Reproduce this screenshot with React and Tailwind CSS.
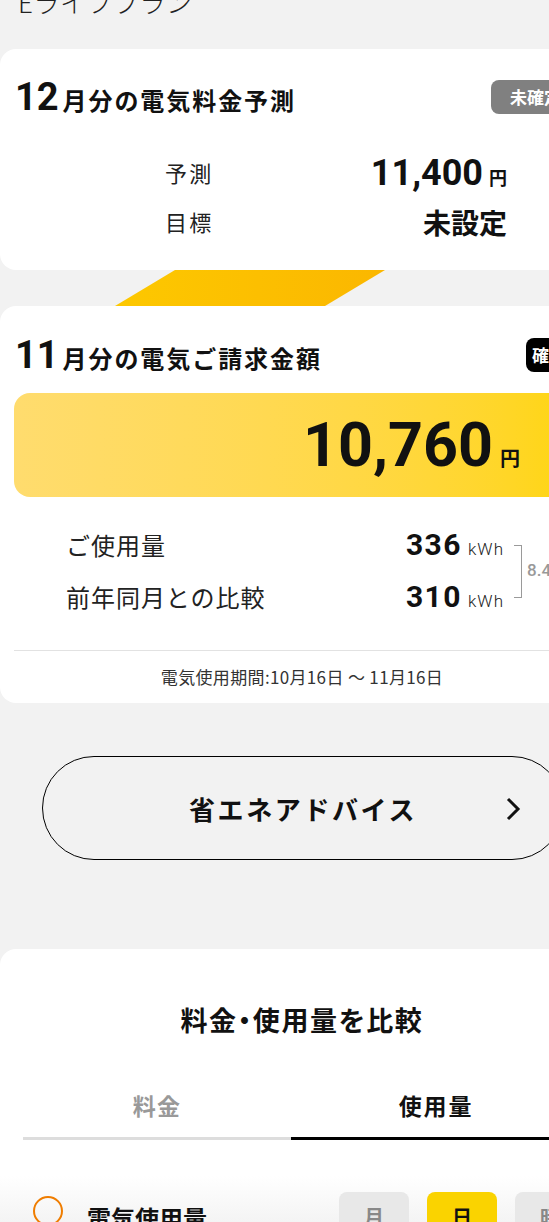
const jp = { fontFamily: '"Noto Sans CJK JP", "Noto Sans", sans-serif' }
const num = { fontFamily: 'Roboto, "Noto Sans CJK JP", sans-serif' }

function Badge({ children, className }) {
  return (
    <div
      className={`h-[34px] shrink-0 rounded-[8px] flex items-center text-[17px] font-bold text-white ${className}`}
    >
      {children}
    </div>
  )
}

function CardTitle({ month, label, badge }) {
  return (
    <div className="flex items-center justify-between h-[34px]">
      <div className="flex items-baseline pl-[1px]">
        <span style={num} className="text-[38px] font-bold leading-none text-[#111]">
          {month}
        </span>
        <span className="ml-[4px] text-[24px] font-bold tracking-[0.08em] text-[#111] leading-none">
          {label}
        </span>
      </div>
      {badge}
    </div>
  )
}

function UsageRow({ label, value }) {
  return (
    <div className="h-[52px] flex items-center justify-between">
      <span className="text-[24px] tracking-[0.04em] text-[#222]">{label}</span>
      <span className="flex items-baseline">
        <span style={num} className="text-[30px] font-bold tracking-[0.05em] text-[#111] leading-none">
          {value}
        </span>
        <span style={num} className="ml-[6px] text-[17px] font-light tracking-[0.06em] text-[#222] leading-none">
          kWh
        </span>
      </span>
    </div>
  )
}

export default function App() {
  return (
    <div style={jp} className="w-[549px] h-[1222px] overflow-hidden bg-[#f2f2f2]">
      <div className="w-[604px]">
        {/* page heading, scrolled partly out of view */}
        <div className="-mt-[14px] h-[32px] pl-[18px] text-[26px] font-light tracking-[0.02em] leading-[32px] text-[#222]">
          Eライフプラン
        </div>

        {/* 12月 forecast */}
        <section className="mt-[31px] bg-white rounded-[16px] px-[14px] pt-[31px] pb-[24px]">
          <CardTitle
            month="12"
            label="月分の電気料金予測"
            badge={<Badge className="w-[99px] bg-[#808080] pl-[19px]">未確定</Badge>}
          />
          <div className="mt-[34px] ml-[151px] w-[342px]">
            <div className="h-[49px] flex items-center justify-between">
              <span className="text-[22px] tracking-[0.1em] text-[#222]">予測</span>
              <span className="flex items-baseline">
                <span style={num} className="text-[36px] font-bold leading-none text-[#111]">
                  11,400
                </span>
                <span className="ml-[6px] text-[18px] font-bold leading-none text-[#111]">円</span>
              </span>
            </div>
            <div className="h-[49px] flex items-center justify-between">
              <span className="text-[22px] tracking-[0.1em] text-[#222]">目標</span>
              <span className="text-[28px] font-bold leading-none text-[#111]">未設定</span>
            </div>
          </div>
        </section>

        {/* ribbon between cards */}
        <div className="ml-[115px] w-[270px] h-[36px] bg-linear-to-r from-[#fdc800] to-[#fbb700] [clip-path:polygon(60px_0,100%_0,calc(100%-60px)_100%,0_100%)]" />

        {/* 11月 bill */}
        <section className="bg-white rounded-[16px] px-[14px] pt-[32px]">
          <CardTitle
            month="11"
            label="月分の電気ご請求金額"
            badge={<Badge className="w-[64px] bg-black pl-[6px]">確定</Badge>}
          />
          <div className="mt-[21px] h-[104px] rounded-[16px] bg-linear-to-r from-[#ffdc6e] to-[#ffd500] flex items-center justify-end pr-[70px]">
            <span className="flex items-baseline">
              <span style={num} className="text-[61px] font-bold leading-none text-[#111]">
                10,760
              </span>
              <span className="ml-[7px] text-[20px] font-bold leading-none text-[#111]">円</span>
            </span>
          </div>

          <div className="mt-[22px] ml-[52px] flex items-center">
            <div className="w-[438px]">
              <UsageRow label="ご使用量" value="336" />
              <UsageRow label="前年同月との比較" value="310" />
            </div>
            <div className="ml-[10px] w-[8px] h-[53px] border-y border-r border-[#9a9a9a]" />
            <span style={num} className="ml-[5px] text-[17px] font-medium text-[#999]">
              8.4%
            </span>
          </div>

          <div className="mt-[27px] border-t border-[#e2e2e2] h-[53px] flex items-center justify-center">
            <span className="text-[17px] tracking-[0.02em] text-[#333]">電気使用期間:10月16日 〜 11月16日</span>
          </div>
        </section>

        {/* advice button */}
        <button className="relative mt-[53px] ml-[42px] w-[522px] h-[104px] rounded-full border border-black flex items-center justify-center">
          <span className="text-[26px] font-bold tracking-[0.1em] text-[#111]">省エネアドバイス</span>
          <svg
            className="absolute right-[42px] top-[40px]"
            width="15"
            height="24"
            viewBox="0 0 15 24"
            fill="none"
            stroke="#111"
            strokeWidth="3"
          >
            <polyline points="2,2 12,12 2,22" />
          </svg>
        </button>

        {/* comparison */}
        <section className="mt-[89px] bg-white rounded-t-[16px] pt-[53px]">
          <h2 className="text-center text-[27px] font-bold tracking-[0.06em] leading-[36px] text-[#111] [font-feature-settings:'palt']">
            料金・使用量を比較
          </h2>
          <div className="mt-[51px] ml-[23px] flex">
            <div className="w-[268px] pb-[16px] border-b-[3px] border-[#dddddd] text-center text-[23px] font-bold tracking-[0.05em] leading-[32px] text-[#999]">
              料金
            </div>
            <div className="w-[290px] pb-[16px] border-b-[3px] border-black text-center text-[23px] font-bold tracking-[0.08em] leading-[32px] text-[#111]">
              使用量
            </div>
          </div>

          <div className="mt-[36px] pt-[16px] h-[80px] pl-[33px] pr-[19px] flex items-start bg-linear-to-b from-white to-[#ececec]">
            <div className="mt-[4px] w-[30px] h-[30px] rounded-full border-2 border-[#ef7d00]" />
            <span className="ml-[24px] mt-[10px] text-[24px] font-bold leading-[32px] text-[#111]">
              電気使用量
            </span>
            <div className="ml-auto flex gap-[18px]">
              <div className="w-[70px] h-[50px] rounded-[8px] bg-[#e8e8e8] flex items-center justify-center text-[20px] font-bold text-[#888]">
                月
              </div>
              <div className="w-[70px] h-[50px] rounded-[8px] bg-[#fad300] flex items-center justify-center text-[20px] font-bold text-[#111]">
                日
              </div>
              <div className="w-[70px] h-[50px] rounded-[8px] bg-[#e8e8e8] flex items-center justify-center text-[20px] font-bold text-[#888]">
                時
              </div>
            </div>
          </div>
        </section>
      </div>
    </div>
  )
}
